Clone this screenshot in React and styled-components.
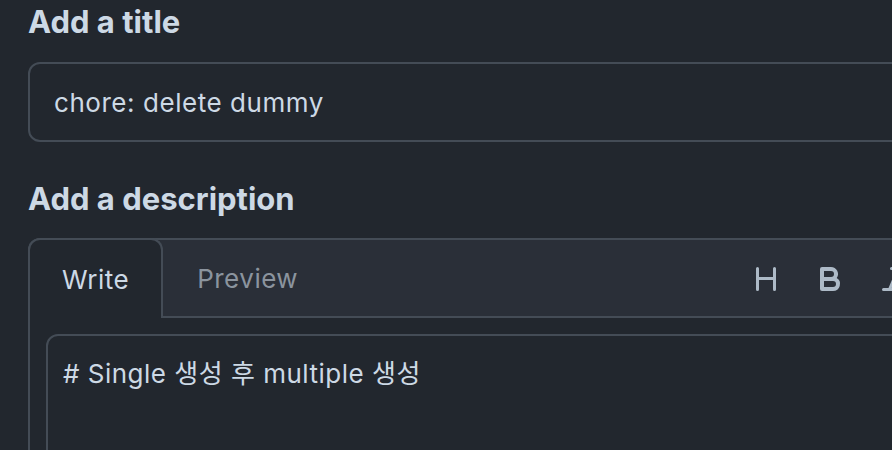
import React from 'react'
import styled, { createGlobalStyle } from 'styled-components'

const GlobalStyle = createGlobalStyle`
  html, body {
    margin: 0;
    padding: 0;
    background: #22272e;
    overflow: hidden;
  }
  body {
    font-family: Inter, "Noto Sans CJK KR", "Noto Sans", sans-serif;
    color: #cdd9e5;
  }
`

const Page = styled.div`
  padding-left: 28px;
  width: 1400px;
`

const Label = styled.div`
  font-size: 31px;
  font-weight: 700;
  line-height: 44px;
  color: #cdd9e5;
  margin-top: ${(p) => p.$top || 0}px;
  margin-bottom: ${(p) => p.$bottom || 0}px;
`

const TitleInput = styled.div`
  height: 76px;
  border: 2px solid #444c56;
  border-radius: 12px;
  padding: 0 24px;
  display: flex;
  align-items: center;
  font-size: 26px;
  letter-spacing: 0.55px;
  color: #cdd9e5;
`

const Editor = styled.div`
  border: 2px solid #444c56;
  border-radius: 12px;
  height: 400px;
`

const TabBar = styled.div`
  display: flex;
  height: 78px;
  background: #2a2f38;
  border-top-left-radius: 12px;
`

const ActiveTab = styled.div`
  box-sizing: border-box;
  height: 80px;
  margin: -2px 0 0 -2px;
  padding: 0 32px;
  display: flex;
  align-items: center;
  font-size: 26px;
  letter-spacing: 0.5px;
  border: 2px solid #444c56;
  border-bottom: 0;
  border-radius: 12px 12px 0 0;
  background: #22272e;
  color: #cdd9e5;
`

const Tab = styled.div`
  box-sizing: border-box;
  height: 78px;
  padding: 0 34px;
  display: flex;
  align-items: center;
  font-size: 26px;
  letter-spacing: 0.5px;
  border-bottom: 2px solid #444c56;
  color: #8b949e;
`

const Filler = styled.div`
  flex: 1;
  display: flex;
  align-items: center;
  border-bottom: 2px solid #444c56;
`

const Toolbar = styled.div`
  display: flex;
  align-items: center;
  gap: 32px;
  margin-left: 418px;
  margin-top: 2px;
`

const IconButton = styled.span`
  display: flex;
  width: 32px;
  height: 32px;
  color: #adbac7;
`

const Body = styled.div`
  padding: 16px;
`

const TextArea = styled.div`
  border: 2px solid #444c56;
  border-radius: 12px;
  height: 300px;
  padding: 20px 15px;
  font-size: 26px;
  letter-spacing: 0.5px;
  line-height: 36px;
  color: #cdd9e5;
`

const icons = [
  'M3.75 2a.75.75 0 0 1 .75.75V7h7V2.75a.75.75 0 0 1 1.5 0v10.5a.75.75 0 0 1-1.5 0V8.5h-7v4.75a.75.75 0 0 1-1.5 0V2.75A.75.75 0 0 1 3.75 2Z',
  'M4 2h4.5a3.501 3.501 0 0 1 2.852 5.53A3.499 3.499 0 0 1 9.5 14H4a1 1 0 0 1-1-1V3a1 1 0 0 1 1-1Zm1 7v3h4.5a1.5 1.5 0 0 0 0-3Zm3.5-2a1.5 1.5 0 0 0 0-3H5v3Z',
  'M6 2.75A.75.75 0 0 1 6.75 2h6.5a.75.75 0 0 1 0 1.5h-2.505l-3.858 9H9.25a.75.75 0 0 1 0 1.5h-6.5a.75.75 0 0 1 0-1.5h2.505l3.858-9H6.75A.75.75 0 0 1 6 2.75Z',
]

function Icon({ d }) {
  return (
    <IconButton>
      <svg width="32" height="32" viewBox="0 0 16 16" fill="currentColor">
        <path d={d} />
      </svg>
    </IconButton>
  )
}

export default function App() {
  return (
    <>
      <GlobalStyle />
      <Page>
        <Label $bottom={18}>Add a title</Label>
        <TitleInput>chore: delete dummy</TitleInput>
        <Label $top={35} $bottom={17}>Add a description</Label>
        <Editor>
          <TabBar>
            <ActiveTab>Write</ActiveTab>
            <Tab>Preview</Tab>
            <Filler>
              <Toolbar>
                {icons.map((d, i) => (
                  <Icon key={i} d={d} />
                ))}
              </Toolbar>
            </Filler>
          </TabBar>
          <Body>
            <TextArea># Single 생성 후 multiple 생성</TextArea>
          </Body>
        </Editor>
      </Page>
    </>
  )
}
